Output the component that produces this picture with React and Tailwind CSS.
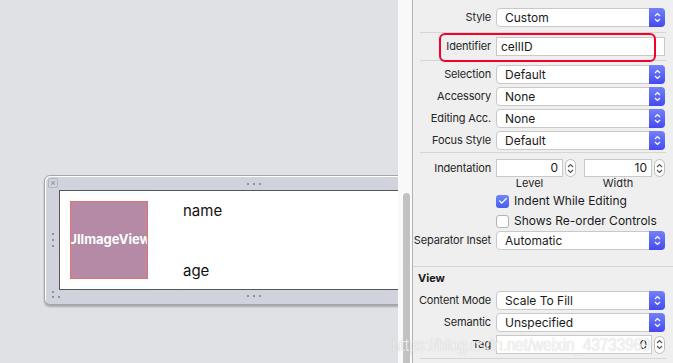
import { Check } from "lucide-react";

const font = "font-['Inter','Liberation_Sans',sans-serif]";

function Arrows({ className = "" }) {
  return (
    <svg width="7" height="11" viewBox="0 0 7 11" className={className}>
      <path d="M1 4 L3.5 1.5 L6 4" fill="none" stroke="currentColor" strokeWidth="1.2" />
      <path d="M1 7 L3.5 9.5 L6 7" fill="none" stroke="currentColor" strokeWidth="1.2" />
    </svg>
  );
}

function Popup({ value }) {
  return (
    <div className="flex h-[19px] w-[169px] items-center rounded-[4px] border border-[#c9c9c9] bg-white">
      <span className="flex-1 pl-[8px] text-[12px] text-[#1a1a1a]">{value}</span>
      <div className="flex h-[19px] w-[16px] items-center justify-center rounded-r-[4px] bg-gradient-to-b from-[#7480fb] to-[#4747f0] text-white -mr-px">
        <Arrows />
      </div>
    </div>
  );
}

function Row({ label, children, bold }) {
  return (
    <div className="flex items-center">
      <div className={`w-[79px] whitespace-nowrap pr-[1px] text-right text-[11px] tracking-[-0.15px] text-[#262626] ${bold ? "font-bold" : ""}`}>{label}</div>
      <div className="ml-[4px]">{children}</div>
    </div>
  );
}

function Stepper() {
  return (
    <div className="flex h-[18px] w-[11px] items-center justify-center rounded-full border border-[#bdbdbd] bg-white text-[#555]">
      <Arrows />
    </div>
  );
}

function Sep({ className = "" }) {
  return <div className={`ml-[7px] mr-[7px] h-px bg-[#d6d6d6] ${className}`} />;
}

function Dots({ vertical = false }) {
  return (
    <div className={`flex ${vertical ? "flex-col gap-[4px]" : "gap-[4px]"}`}>
      <span className="h-[2px] w-[2px] rounded-full bg-[#7a7d86]" />
      <span className="h-[2px] w-[2px] rounded-full bg-[#7a7d86]" />
      <span className="h-[2px] w-[2px] rounded-full bg-[#7a7d86]" />
    </div>
  );
}

export default function App() {
  return (
    <div className={`relative flex h-[363px] w-[673px] overflow-hidden bg-[#e0e1e5] ${font}`}>
      {/* canvas */}
      <div className="w-[398px] shrink-0 overflow-hidden pl-[44px] pt-[175px]">
        <div className="relative h-[130px] w-[420px] rounded-[6px] border border-[#a3a5ab] bg-[#d0d3dc] p-[14px] pr-0 shadow-[0_2px_2px_rgba(0,0,0,0.25),inset_1px_1px_0_#fff]">
          {/* close */}
          <div className="absolute left-[3px] top-[2px] flex h-[10px] w-[10px] items-center justify-center rounded-[2px] border border-[#b3b6bd] text-[8px] font-bold leading-none text-[#9a9ca3]">
            ×
          </div>
          <div className="absolute left-[202px] top-[7px]"><Dots /></div>
          <div className="absolute left-[202px] bottom-[7px]"><Dots /></div>
          <div className="absolute left-[7px] top-[57px]"><Dots vertical /></div>
          <div className="absolute left-[7px] bottom-[6px] flex flex-col gap-[3px]">
            <span className="h-[2px] w-[2px] rounded-full bg-[#7a7d86]" />
            <div className="flex gap-[4px]">
              <span className="h-[2px] w-[2px] rounded-full bg-[#7a7d86]" />
              <span className="h-[2px] w-[2px] rounded-full bg-[#7a7d86]" />
            </div>
          </div>
          <div className="flex h-[100px] items-start border-y border-l border-[#55575c] bg-white pl-[10px] pt-[10px]">
            <div className="flex h-[78px] w-[78px] shrink-0 items-center justify-center overflow-hidden border border-[#de7768] bg-[#b58aa6]">
              <span className="whitespace-nowrap text-[13px] font-bold text-white">UIImageView</span>
            </div>
            <div className="ml-[35px] flex h-[78px] flex-col justify-between text-[15px] text-[#111]">
              <span className="-mt-[1px]">name</span>
              <span className="mb-[-3px]">age</span>
            </div>
          </div>
        </div>
      </div>

      {/* scroll strip */}
      <div className="flex w-[15px] shrink-0 flex-col border-r border-[#b3b3b3] bg-[#f9f9f9] pt-[193px] pl-[5px]">
        <div className="w-[7px] flex-1 rounded-t-full bg-[#c2c2c2]" />
      </div>

      {/* inspector */}
      <div className="flex-1 bg-[#efefef] pt-[8px]">
        <Row label="Style"><Popup value="Custom" /></Row>
        <Sep className="mt-[5px]" />
        <div className="relative mt-[4px]">
          <Row label="Identifier">
            <div className="flex h-[19px] w-[169px] items-center border border-[#c9c9c9] bg-white pl-[4px] text-[12px] text-[#1a1a1a]">cellID</div>
          </Row>
          <div className="absolute left-[26px] top-[-4px] h-[29px] w-[217px] rounded-[6px] border-2 border-[#f4002a]" />
        </div>
        <Sep className="mt-[4px]" />
        <div className="mt-[4px] flex flex-col gap-[3px]">
          <Row label="Selection"><Popup value="Default" /></Row>
          <Row label="Accessory"><Popup value="None" /></Row>
          <Row label="Editing Acc."><Popup value="None" /></Row>
          <Row label="Focus Style"><Popup value="Default" /></Row>
        </div>
        <Sep className="mt-[2px]" />
        <div className="mt-[6px]">
          <Row label="Indentation">
            <div className="flex items-center">
              <div className="flex h-[18px] w-[67px] items-center justify-end border border-[#c9c9c9] bg-white pr-[4px] text-[12px] text-[#1a1a1a]">0</div>
              <div className="ml-[2px]"><Stepper /></div>
              <div className="ml-[8px] flex h-[18px] w-[68px] items-center justify-end border border-[#c9c9c9] bg-white pr-[4px] text-[12px] text-[#1a1a1a]">10</div>
              <div className="ml-[2px]"><Stepper /></div>
            </div>
          </Row>
        </div>
        <div className="ml-[83px] flex h-[12px] items-center text-[11px] text-[#262626]">
          <span className="w-[67px] text-center">Level</span>
          <span className="ml-[21px] w-[68px] text-center">Width</span>
        </div>
        <div className="ml-[83px] mt-[4px] flex h-[16px] items-center gap-[5px] text-[12px] text-[#1a1a1a]">
          <div className="flex h-[13px] w-[13px] items-center justify-center rounded-[3px] bg-gradient-to-b from-[#6f86fa] to-[#4a5cf0] text-white">
            <Check size={10} strokeWidth={3} />
          </div>
          Indent While Editing
        </div>
        <div className="ml-[83px] mt-[4px] flex h-[16px] items-center gap-[5px] text-[12px] text-[#1a1a1a]">
          <div className="h-[13px] w-[13px] rounded-[3px] border border-[#b3b3b3] bg-white" />
          Shows Re-order Controls
        </div>
        <div className="mt-[2px]">
          <Row label="Separator Inset"><Popup value="Automatic" /></Row>
        </div>
        <div className="mt-[16px] h-px bg-[#d6d6d6]" />
        <div className="mt-[3px] h-[14px] pl-[5px] text-[11px] font-bold text-[#1a1a1a]">View</div>
        <div className="mt-[7px] flex flex-col gap-[3px]">
          <Row label="Content Mode"><Popup value="Scale To Fill" /></Row>
          <Row label="Semantic"><Popup value="Unspecified" /></Row>
          <Row label="Tag">
            <div className="flex items-center">
              <div className="flex h-[19px] w-[156px] items-center justify-end border border-[#c9c9c9] bg-white pr-[4px] text-[12px] text-[#1a1a1a]">0</div>
              <div className="ml-[2px]"><Stepper /></div>
            </div>
          </Row>
        </div>
        <Sep className="mt-[4px]" />
      </div>

      {/* watermark */}
      <div className="pointer-events-none absolute left-[392px] top-[335px] origin-left scale-x-[0.8] whitespace-nowrap font-['Liberation_Sans',sans-serif] text-[19px] leading-none text-white/80 [text-shadow:0_0_1px_rgba(0,0,0,0.25)]">
        https://blog.csdn.net/weixin_43733969
      </div>
    </div>
  );
}
